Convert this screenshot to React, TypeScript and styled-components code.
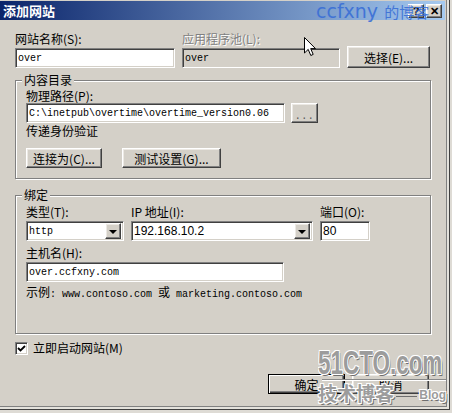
import React from 'react';
import styled, { createGlobalStyle, css } from 'styled-components';

const FACE = '#d4d0c8';
const SHADOW = '#808080';
const DARK = '#404040';
const CJK = `"Noto Sans CJK SC", "Noto Sans", sans-serif`;
const MONO = `"Liberation Mono", "Noto Sans CJK SC", monospace`;
const SANS = `"Liberation Sans", "Noto Sans CJK SC", sans-serif`;

const GlobalStyle = createGlobalStyle`
  html, body { margin: 0; padding: 0; background: #dedbd5; }
  body { font-family: ${CJK}; font-size: 12px; color: #000; }
  * { box-sizing: border-box; }
`;

/// bevels
const raised = css`
  background: ${FACE};
  border: 1px solid;
  border-color: #fff ${DARK} ${DARK} #fff;
  box-shadow: inset -1px -1px 0 ${SHADOW}, inset 1px 1px 0 #ece9e4;
`;

const sunken = css`
  border: 1px solid;
  border-color: ${SHADOW} #fff #fff ${SHADOW};
  box-shadow: inset 1px 1px 0 ${DARK}, inset -1px -1px 0 ${FACE};
`;

/// window frame
const Dialog = styled.div`
  position: relative;
  width: 450px;
  height: 410px;
  padding: 1px 5px 0 0;
  background: ${FACE};
  box-shadow: inset -1px -1px 0 ${DARK}, inset -3px -3px 0 #e4e2dc, inset -4px -4px 0 ${SHADOW};
  overflow: hidden;
`;

const TitleBar = styled.div`
  display: flex;
  align-items: center;
  justify-content: space-between;
  height: 19px;
  padding: 0 3px;
  background: linear-gradient(to right, #0a246a, #a6caf0);
`;

const Title = styled.span`
  color: #fff;
  font-weight: 700;
  font-size: 13px;
  line-height: 19px;
`;

const CaptionButtons = styled.div`
  display: flex;
  gap: 2px;
`;

const CaptionButton = styled.span`
  ${raised}
  width: 16px;
  height: 14px;
  display: flex;
  align-items: center;
  justify-content: center;
  font: 700 11px ${SANS};
  line-height: 12px;
`;

const Body = styled.div`
  display: flex;
  flex-direction: column;
  padding: 12px 14px 0 15px;
`;

/// controls
const TopGrid = styled.div`
  display: grid;
  grid-template-columns: 160px 158px 83px;
  column-gap: 7px;
  align-items: end;
`;

const Label = styled.div<{ $disabled?: boolean; $gap?: number }>`
  line-height: 14px;
  font-size: 12px;
  white-space: nowrap;
  margin-top: ${(p) => p.$gap ?? 0}px;
  color: ${(p) => (p.$disabled ? SHADOW : '#000')};
  text-shadow: ${(p) => (p.$disabled ? '1px 1px 0 #fff' : 'none')};
`;

const TextBox = styled.div<{ $w?: number; $disabled?: boolean; $sans?: boolean; $gap?: number }>`
  ${sunken}
  width: ${(p) => (p.$w ? `${p.$w}px` : 'auto')};
  height: 20px;
  margin-top: ${(p) => p.$gap ?? 0}px;
  padding: 0 2px 0 2px;
  display: flex;
  align-items: center;
  background: ${(p) => (p.$disabled ? FACE : '#fff')};
  font-family: ${(p) => (p.$sans ? SANS : MONO)};
  font-size: ${(p) => (p.$sans ? '12px' : '10px')};
  white-space: nowrap;
  overflow: hidden;
`;

const ComboValue = styled.span`
  flex: 1;
`;

const ComboArrow = styled.span`
  ${raised}
  width: 16px;
  height: 16px;
  display: flex;
  align-items: center;
  justify-content: center;
  &::after {
    content: '';
    border-left: 4px solid transparent;
    border-right: 4px solid transparent;
    border-top: 4px solid #000;
    margin-top: 1px;
  }
`;

const PushButton = styled.button<{ $w: number; $h?: number; $default?: boolean }>`
  ${raised}
  width: ${(p) => p.$w}px;
  height: ${(p) => p.$h ?? 20}px;
  padding: 0;
  font: 12px ${CJK};
  color: #000;
  white-space: nowrap;
  ${(p) =>
    p.$default &&
    css`
      border: 1px solid #000;
      box-shadow: inset 1px 1px 0 #fff, inset -1px -1px 0 ${DARK}, inset -2px -2px 0 ${SHADOW};
    `}
`;

const Dots = styled.span`
  color: #555;
  font: 10px ${MONO};
  letter-spacing: 0.5px;
`;

/// groups
const Group = styled.fieldset<{ $top: number; $bottom: number }>`
  margin: ${(p) => p.$top}px 0 0;
  padding: 2px 10px ${(p) => p.$bottom}px 10px;
  border: 1px solid ${SHADOW};
  box-shadow: inset 1px 1px 0 #fff, 1px 1px 0 #fff;
  min-width: 0;
`;

const Legend = styled.legend`
  padding: 0 2px;
  margin-left: -4px;
  line-height: 14px;
  font-size: 12px;
  background: ${FACE};
`;

const Row = styled.div<{ $gap: number; $top?: number }>`
  display: flex;
  align-items: center;
  gap: ${(p) => p.$gap}px;
  margin-top: ${(p) => p.$top ?? 0}px;
`;

const BindGrid = styled.div`
  display: grid;
  grid-template-columns: 98px 182px 50px;
  column-gap: 7px;
  row-gap: 2px;
  margin-top: 1px;
`;

const Mono = styled.span`
  font: 10px ${MONO};
`;

const CheckRow = styled.div`
  display: flex;
  align-items: center;
  gap: 5px;
  margin-top: 7px;
  line-height: 14px;
`;

const CheckBox = styled.span`
  ${sunken}
  width: 13px;
  height: 13px;
  background: #fff;
  display: flex;
  align-items: center;
  justify-content: center;
`;

const Footer = styled.div`
  display: flex;
  justify-content: flex-end;
  gap: 7px;
  margin-top: 19px;
  padding-right: 2px;
`;

/// overlays: screenshot watermarks and mouse pointer
const BlogMark = styled.div`
  position: absolute;
  left: 316px;
  top: 0;
  line-height: 22px;
  color: #3a6fd6;
  opacity: 0.9;
  white-space: nowrap;
`;

const BlogLatin = styled.span`
  font: 19px "DejaVu Sans", sans-serif;
`;

const BlogCjk = styled.span`
  font: 15px ${CJK};
  margin-left: 6px;
`;

const Pointer = styled.svg`
  position: absolute;
  left: 304px;
  top: 37px;
`;

const Stamp = styled.div`
  position: absolute;
  left: 318px;
  top: 346px;
  width: 128px;
  display: flex;
  flex-direction: column;
  color: #9c9c9c;
  text-shadow: -1px -1px 0 #fff, 1px -1px 0 #fff, -1px 1px 0 #fff, 1px 1px 0 #fff, 2px 2px 0 #6e6e6e;
  white-space: nowrap;
`;

const StampBig = styled.div`
  font: 700 33px ${SANS};
  line-height: 33px;
  transform: scaleX(0.68);
  transform-origin: left top;
`;

const StampRule = styled.div`
  height: 2px;
  margin: 0 0 0 4px;
  border-top: 1px solid #8a8a8a;
  border-bottom: 1px solid #fff;
`;

const StampRow = styled.div`
  display: flex;
  align-items: center;
  gap: 2px;
  margin-top: 1px;
`;

const StampCjk = styled.span`
  font: 700 19px ${CJK};
  line-height: 22px;
`;

const StampDash = styled.span`
  flex: 1;
  height: 1px;
  background: #6e6e6e;
  margin-top: 6px;
`;

const StampBlog = styled.span`
  font: 700 12px ${SANS};
  margin-top: 4px;
`;

export default function App() {
  return (
    <>
      <GlobalStyle />
      <Dialog>
        <TitleBar>
          <Title>添加网站</Title>
          <CaptionButtons>
            <CaptionButton>?</CaptionButton>
            <CaptionButton>✕</CaptionButton>
          </CaptionButtons>
        </TitleBar>

        <Body>
          <TopGrid>
            <Label>网站名称(S):</Label>
            <Label $disabled>应用程序池(L):</Label>
            <span />
            <TextBox>over</TextBox>
            <TextBox $disabled>over</TextBox>
            <PushButton $w={83} $h={22}>
              选择(E)...
            </PushButton>
          </TopGrid>

          <Group $top={5} $bottom={10}>
            <Legend>内容目录</Legend>
            <Label>物理路径(P):</Label>
            <Row $gap={6}>
              <TextBox $w={259}>C:\inetpub\overtime\overtime_version0.06</TextBox>
              <PushButton $w={27}>
                <Dots>...</Dots>
              </PushButton>
            </Row>
            <Label $gap={1}>传递身份验证</Label>
            <Row $gap={20} $top={10}>
              <PushButton $w={76}>连接为(C)...</PushButton>
              <PushButton $w={99}>测试设置(G)...</PushButton>
            </Row>
          </Group>

          <Group $top={9} $bottom={33}>
            <Legend>绑定</Legend>
            <BindGrid>
              <Label>类型(T):</Label>
              <Label>IP 地址(I):</Label>
              <Label>端口(O):</Label>
              <TextBox>
                <ComboValue>http</ComboValue>
                <ComboArrow />
              </TextBox>
              <TextBox $sans>
                <ComboValue>192.168.10.2</ComboValue>
                <ComboArrow />
              </TextBox>
              <TextBox $sans>80</TextBox>
            </BindGrid>
            <Label $gap={5}>主机名(H):</Label>
            <TextBox $w={258} $gap={2}>
              over.ccfxny.com
            </TextBox>
            <Label $gap={3}>
              示例<Mono>: www.contoso.com </Mono>或<Mono> marketing.contoso.com</Mono>
            </Label>
          </Group>

          <CheckRow>
            <CheckBox>
              <svg width="9" height="9" viewBox="0 0 9 9">
                <path d="M1 4 L3.5 6.5 L8 2" fill="none" stroke="#000" strokeWidth="1.8" />
              </svg>
            </CheckBox>
            <span>立即启动网站(M)</span>
          </CheckRow>

          <Footer>
            <PushButton $w={77} $default>
              确定
            </PushButton>
            <PushButton $w={77}>取消</PushButton>
          </Footer>
        </Body>

        <BlogMark>
          <BlogLatin>ccfxny</BlogLatin>
          <BlogCjk>的博客</BlogCjk>
        </BlogMark>

        <Pointer width="13" height="20" viewBox="0 0 13 20">
          <path d="M0.5 0.5 L0.5 16 L4.2 12.4 L6.8 18.5 L9.2 17.4 L6.7 11.6 L11.5 11.6 Z" fill="#fff" stroke="#000" strokeWidth="1" />
        </Pointer>

        <Stamp>
          <StampBig>51CTO.com</StampBig>
          <StampRule />
          <StampRow>
            <StampCjk>技术博客</StampCjk>
            <StampDash />
            <StampBlog>Blog</StampBlog>
          </StampRow>
        </Stamp>
      </Dialog>
    </>
  );
}
